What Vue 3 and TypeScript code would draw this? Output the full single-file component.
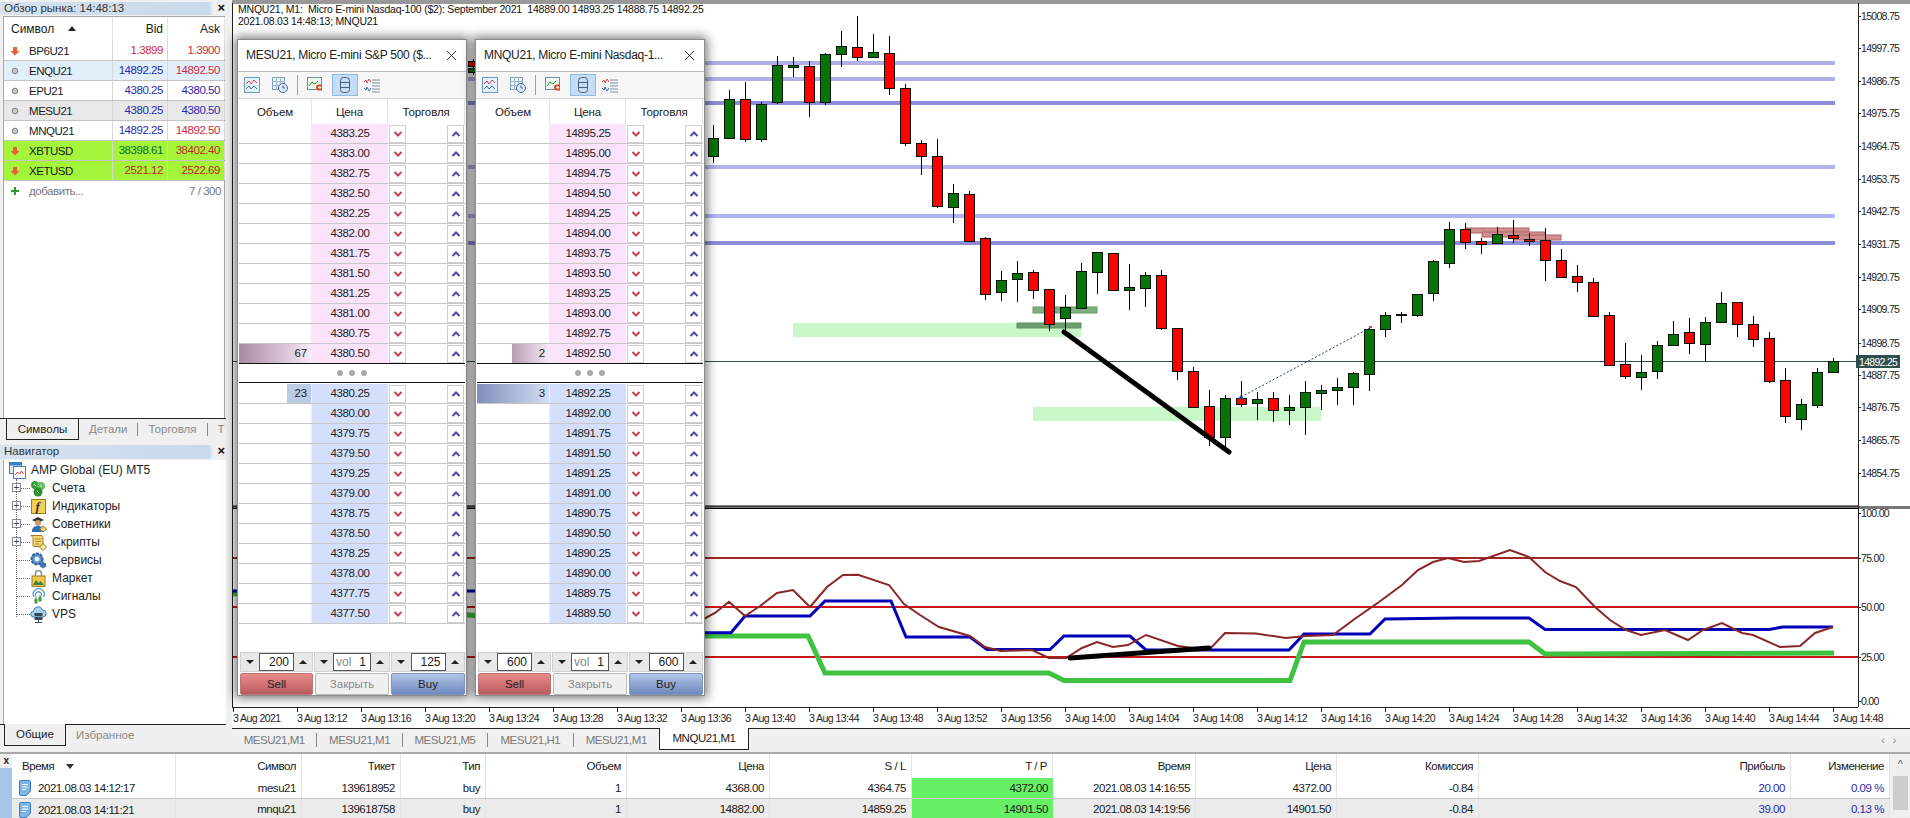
<script setup lang="ts">
type Candle = [number, 'r' | 'g', number, number, number, number]

const candles: Candle[] = [
  [15, 'r', 61, 66, 59, 67], [15, 'g', 68, 72, 66, 75],
  [30,'g',138,156,125,163],[31,'g',99,138,90,139],[32,'r',99,139,82,142],[33,'g',104,139,102,142],
  [34,'g',65,102,56,104],[35,'g',65,67,57,77],[36,'r',66,102,61,117],[37,'g',54,102,53,105],
  [38,'g',46,54,31,67],[39,'r',47,57,16,61],[40,'g',52,57,34,58],[41,'r',53,88,36,95],
  [42,'r',88,143,84,146],[43,'r',143,156,140,175],[44,'r',156,206,139,208],[45,'g',193,207,184,223],
  [46,'r',194,241,191,241],[47,'r',238,294,237,300],[48,'g',280,292,271,301],[49,'g',273,279,261,302],
  [50,'r',272,290,270,299],[51,'r',289,324,289,331],[52,'g',307,318,295,332],[53,'g',271,308,263,308],
  [54,'g',252,272,252,294],[55,'r',253,290,253,291],[56,'g',287,290,264,310],[57,'g',275,288,272,307],
  [58,'r',275,328,270,330],[59,'r',328,371,328,380],[60,'r',371,407,367,408],[61,'r',406,437,390,446],
  [62,'g',398,437,395,448],[63,'r',398,404,381,407],[64,'g',399,403,392,420],[65,'r',398,410,392,422],
  [66,'g',407,410,395,425],[67,'g',392,407,381,435],[68,'g',390,393,385,410],[69,'g',387,390,378,405],
  [70,'g',373,387,372,405],[71,'g',329,374,327,391],[72,'g',315,329,312,337],[73,'g',314,315,312,323],
  [74,'g',294,315,294,317],[75,'g',261,293,260,301],[76,'g',229,263,222,268],[77,'r',229,242,223,249],
  [78,'r',241,244,238,254],[79,'g',234,243,227,244],[80,'r',235,238,220,243],[81,'r',239,241,233,246],
  [82,'r',240,260,228,281],[83,'r',260,277,249,278],[84,'r',276,282,265,292],[85,'r',282,316,278,317],
  [86,'r',315,365,312,365],[87,'r',364,376,343,379],[88,'g',372,377,355,390],[89,'g',345,371,341,379],
  [90,'g',334,345,321,345],[91,'r',332,343,318,354],[92,'g',322,344,317,362],[93,'g',303,322,292,322],
  [94,'r',302,324,302,337],[95,'r',324,339,316,347],[96,'r',338,381,332,383],[97,'r',380,416,368,423],
  [98,'g',404,419,399,430],[99,'g',372,405,368,408],[100,'g',361,372,358,373],
]
const cx = (n: number) => 233 + 16 * n

const levels = [
  { y: 63, c: '#b0b0e6' }, { y: 79, c: '#b0b0e6' }, { y: 103, c: '#8c8cd8' },
  { y: 167, c: '#b4b4ea' }, { y: 216, c: '#b4b4f0' }, { y: 243, c: '#8c8cd8' },
]
const priceLabels: [string, number][] = [
  ['15008.75',16],['14997.75',48],['14986.75',81],['14975.75',113],['14964.75',146],['14953.75',179],
  ['14942.75',211],['14931.75',244],['14920.75',277],['14909.75',309],['14898.75',343],['14887.75',375],
  ['14876.75',407],['14865.75',440],['14854.75',473],
]
const indLabels: [string, number][] = [['100.00',513],['75.00',558],['50.00',607],['25.00',657],['0.00',701]]

const timeLabels: { x: number; t: string }[] = []
for (let i = 0; i <= 25; i++) {
  const m = 13 * 60 + 8 + i * 4
  const t = i === 0 ? '3 Aug 2021' : `3 Aug ${Math.floor(m / 60)}:${String(m % 60).padStart(2, '0')}`
  timeLabels.push({ x: 233 + 64 * i, t })
}
const headLine1 = 'MNQU21, M1:  Micro E-mini Nasdaq-100 ($2): September 2021  14889.00 14893.25 14888.75 14892.25'
const headLine2 = '2021.08.03 14:48:13; MNQU21'

const bluePts = '232,591 700,591 700,632.7 731,632.7 745,616 810,616 825,601 891,601 906,637 970,637 987,649.5 1050,649.5 1064,636 1130,636 1146,650 1289,650 1304,634 1370,634 1385,619 1458,618 1529,618 1545,629.5 1769,629.5 1783,627 1833,627'
const greenPts = '232,593.5 700,636 808,636 825,673 1049,673 1064,680.5 1290,680.5 1304,642 1529,642 1545,654 1834,653'
const brownPts = '700,621 715,613 729,601.7 745,616 760,606 777,593 793,590 810,607 827,587 843,575 858,574.7 889,585 904,604 920,615 939,627 970,636 985,647 1001,651 1032,650 1049,658 1066,658 1082,648 1097,642 1113,647 1128,645 1146,635 1178,646 1209,650 1225,633 1256,633.5 1286,638 1306,636 1333,635 1356,618 1379,602 1402,585 1418,570 1433,562 1448,558 1464,562 1479,561 1510,550 1529,557 1545,572 1560,581 1576,587 1595,607 1610,620 1626,630 1641,635 1665,630 1688,640 1703,630 1722,623 1742,633 1753,635 1780,647 1800,646 1815,633 1833,627'

const watch = [
  { s: 'BP6U21', b: '1.3899', a: '1.3900', ic: 'down', bc: 'red', ac: 'red', rc: '' },
  { s: 'ENQU21', b: '14892.25', a: '14892.50', ic: 'dot', bc: 'blue', ac: 'red', rc: 'sel' },
  { s: 'EPU21', b: '4380.25', a: '4380.50', ic: 'dot', bc: 'blue', ac: 'blue', rc: '' },
  { s: 'MESU21', b: '4380.25', a: '4380.50', ic: 'dot', bc: 'blue', ac: 'blue', rc: 'grey' },
  { s: 'MNQU21', b: '14892.25', a: '14892.50', ic: 'dot', bc: 'blue', ac: 'red', rc: '' },
  { s: 'XBTUSD', b: '38398.61', a: '38402.40', ic: 'down', bc: 'dgreen', ac: 'dred', rc: 'lime' },
  { s: 'XETUSD', b: '2521.12', a: '2522.69', ic: 'down', bc: 'dred', ac: 'dred', rc: 'lime' },
]
const treeRows = [
  { t: 'Счета', plus: true, i: 'acc' }, { t: 'Индикаторы', plus: true, i: 'ind' },
  { t: 'Советники', plus: true, i: 'exp' }, { t: 'Скрипты', plus: true, i: 'scr' },
  { t: 'Сервисы', plus: false, i: 'srv' }, { t: 'Маркет', plus: false, i: 'mkt' },
  { t: 'Сигналы', plus: false, i: 'sig' }, { t: 'VPS', plus: false, i: 'vps' },
]

function ladder(start: number, count: number) {
  return Array.from({ length: count }, (_, i) => (start - i * 0.25).toFixed(2))
}
const windows = [
  { title: 'MESU21, Micro E-mini S&P 500 ($...', left: 5, ask: ladder(4383.25, 12), bid: ladder(4380.25, 12), askVol: '67', bidVol: '23',
    askBar: { w: 100, bg: 'linear-gradient(90deg,#a78aa5,#f6e9f4)' }, bidBar: { w: 33, bg: '#bccbe6' }, v1: '200', v2: '125' },
  { title: 'MNQU21, Micro E-mini Nasdaq-1...', left: 243, ask: ladder(14895.25, 12), bid: ladder(14892.25, 12), askVol: '2', bidVol: '3',
    askBar: { w: 52, bg: 'linear-gradient(90deg,#b79db5,#f6e9f4)' }, bidBar: { w: 100, bg: 'linear-gradient(90deg,#7f8fb8,#d3def5)' }, v1: '600', v2: '600' },
]

const tabs = ['MESU21,M1', 'MESU21,M1', 'MESU21,M5', 'MESU21,H1', 'MESU21,M1']
const heads = ['Время', 'Символ', 'Тикет', 'Тип', 'Объем', 'Цена', 'S / L', 'T / P', 'Время', 'Цена', 'Комиссия', 'Прибыль', 'Изменение']
const trades = [
  ['2021.08.03 14:12:17', 'mesu21', '139618952', 'buy', '1', '4368.00', '4364.75', '4372.00', '2021.08.03 14:16:55', '4372.00', '-0.84', '20.00', '0.09 %'],
  ['2021.08.03 14:11:21', 'mnqu21', '139618758', 'buy', '1', '14882.00', '14859.25', '14901.50', '2021.08.03 14:19:56', '14901.50', '-0.84', '39.00', '0.13 %'],
]
</script>

<template>
  <div class="app">
    <div class="top">
      <aside class="left">
        <section class="market">
          <div class="band">
            <span>Обзор рынка: 14:48:13</span><b class="close">×</b>
          </div>
          <div class="mw">
            <div class="mw-row mw-head">
              <span class="c-sym">Символ <i class="tri-up"></i></span><span class="c-num">Bid</span><span class="c-num">Ask</span>
            </div>
            <div v-for="r in watch" :key="r.s" class="mw-row" :class="r.rc">
              <span class="c-sym">
                <svg v-if="r.ic === 'down'" class="mw-ic" viewBox="0 0 10 10"><path d="M3 1h4v4h2.5L5 9.5.5 5H3z" fill="#e8603a" /></svg>
                <svg v-else class="mw-ic" viewBox="0 0 10 10"><circle cx="5" cy="5" r="2.8" fill="#c8c8c8" stroke="#808080" /></svg>
                {{ r.s }}
              </span>
              <span class="c-num" :class="r.bc">{{ r.b }}</span>
              <span class="c-num" :class="r.ac">{{ r.a }}</span>
            </div>
            <div class="mw-row mw-add">
              <span class="c-sym">
                <svg class="mw-ic" viewBox="0 0 10 10"><path d="M4 1h2v3h3v2H6v3H4V6H1V4h3z" fill="#2e9a2e" /></svg>
                добавить...
              </span>
              <span class="c-count">7 / 300</span>
            </div>
          </div>
          <div class="ltabs">
            <span class="ltab on">Символы</span>
            <span class="ltab">Детали</span>
            <span class="ltab">Торговля</span>
            <span class="ltab cut">Т</span>
          </div>
        </section>

        <section class="nav">
          <div class="band nav-band"><span>Навигатор</span><b class="close">×</b></div>
          <div class="tree">
            <div class="tree-root">
              <svg class="ti" viewBox="0 0 17 17">
                <rect x="0.5" y="0.5" width="12" height="11" fill="#d8eafa" stroke="#3b7fc4" />
                <rect x="0.5" y="0.5" width="12" height="3" fill="#3b7fc4" />
                <rect x="4.5" y="4.5" width="12" height="12" fill="#fff" stroke="#4a7fb4" />
                <path d="M6 13l2.500-3 2 2 2-3 2 3" fill="none" stroke="#d04040" />
              </svg>
              <span>AMP Global (EU) MT5</span>
            </div>
            <div class="tree-kids">
              <div v-for="k in treeRows" :key="k.t" class="tree-row">
                <span class="conn"></span>
                <span v-if="k.plus" class="plus">+</span>
                <svg class="ti" viewBox="0 0 17 17">
                  <template v-if="k.i === 'acc'">
                    <circle cx="5" cy="5" r="4" fill="#3da23d" /><circle cx="11" cy="6" r="4" fill="#62c25a" /><circle cx="8" cy="12" r="4.500" fill="#2f8f32" /><path d="M4 4l2 2M10 5l2 2M7 11l2 2" stroke="#d9f5d0" />
                  </template>
                  <template v-else-if="k.i === 'ind'">
                    <rect x="1.500" y="1.500" width="14" height="14" fill="#f4cf55" stroke="#9a7b20" />
                    <text x="5.500" y="13" class="f-glyph">f</text>
                  </template>
                  <template v-else-if="k.i === 'exp'">
                    <path d="M2 4l6-3 6 3-6 3z" fill="#333" /><circle cx="8" cy="7" r="3" fill="#c89a6e" />
                    <path d="M2 16c0-5 2-6 6-6s5 2 5 6z" fill="#2f6fb8" /><path d="M13 10l3.500 3-3.500 3-3.500-3z" fill="#f4d878" stroke="#8a7020" />
                  </template>
                  <template v-else-if="k.i === 'scr'">
                    <path d="M1 1.500h10c1 0 2 1 2 2v9H4c-1 0-1-1-1-2V3.500z" fill="#f6d66e" stroke="#9a7b20" />
                    <path d="M5 5h6M5 7.500h6M5 10h4" stroke="#a88a30" /><path d="M13 9.500l3.500 3.500-3.500 3.500-3.500-3.500z" fill="#fbe9a0" stroke="#8a7020" />
                  </template>
                  <template v-else-if="k.i === 'srv'">
                    <circle cx="7" cy="7" r="5.500" fill="#5a93d0" stroke="#2f6296" stroke-dasharray="3 1" stroke-width="2" /><circle cx="7" cy="7" r="2.500" fill="#e4f0fb" />
                    <circle cx="13" cy="13" r="2.800" fill="#3c78b4" stroke="#2f6296" stroke-dasharray="2 1" />
                  </template>
                  <template v-else-if="k.i === 'mkt'">
                    <path d="M5.500 6V3.500a3 3 0 016 0V6" fill="none" stroke="#8a8a8a" stroke-width="1.500" />
                    <rect x="2" y="6" width="13" height="10.500" fill="#f0c84e" stroke="#9a7b20" />
                    <path d="M3 15l3-5 2.500 3 2-2 3.500 4z" fill="#3e7f3e" />
                  </template>
                  <template v-else-if="k.i === 'sig'">
                    <path d="M4 9a5.500 5.500 0 119.500 0M6 8.500a3 3 0 115 0" fill="none" stroke="#5f9fd0" stroke-width="1.300" />
                    <path d="M6 9v7M10 7v7" stroke="#2a7a2a" /><rect x="4.500" y="11" width="3" height="4" fill="#3aa03a" /><rect x="8.500" y="9" width="3" height="4" fill="#3aa03a" />
                  </template>
                  <template v-else>
                    <path d="M4 11a3 3 0 01-.5-6 4.500 4.500 0 018.800-1 3.500 3.500 0 01.700 7z" fill="#a9d1f0" stroke="#3f7fb8" />
                    <rect x="4.500" y="7" width="8" height="3" fill="#3a4a55" /><rect x="4.500" y="11" width="8" height="3" fill="#3a4a55" /><path d="M8.500 14v2M5 16.500h7" stroke="#3a4a55" />
                  </template>
                </svg>
                <span>{{ k.t }}</span>
              </div>
            </div>
          </div>
          <div class="ltabs bottom-tabs">
            <span class="ltab on btab">Общие</span>
            <span class="ltab plain">Избранное</span>
          </div>
        </section>
      </aside>

      <main class="main">
        <svg class="chart" viewBox="232 0 1678 728" width="1678" height="728">
          <rect x="232" y="0" width="1678" height="728" fill="#fff" />
          <path d="M232 1H1910M232 3H1910" stroke="#333" fill="none" />

          <rect x="793" y="323" width="288" height="14" fill="#c8f8c8" />
          <rect x="1033" y="407" width="288" height="14" fill="#c8f8c8" />

          <rect v-for="l in levels" :key="l.y" x="468" :y="l.y - 2" width="1367" height="4" :fill="l.c" />
          <line x1="232" y1="361.500" x2="1858" y2="361.500" stroke="#2f4f4f" />

          <rect x="1033" y="307" width="64" height="6" fill="#7fae7f" stroke="#6a9a6a" />
          <rect x="1017" y="323" width="64" height="5" fill="#6f9f6f" stroke="#5f8f5f" />
          <rect x="1466" y="228" width="63" height="5" fill="#d09090" stroke="#b06060" />
          <rect x="1482" y="232" width="63" height="5" fill="#d09090" stroke="#b06060" />
          <rect x="1514" y="235" width="47" height="5" fill="#d09090" stroke="#b06060" />

          <g v-for="(c, i) in candles" :key="i">
            <line :x1="cx(c[0]) + 0.5" :y1="c[4]" :x2="cx(c[0]) + 0.5" :y2="c[5]" stroke="#000" />
            <rect :x="cx(c[0]) - 4.5" :y="c[2] + 0.5" width="10" :height="Math.max(c[3] - c[2], 1)" :fill="c[1] === 'r' ? '#f00' : '#087408'" stroke="#0a140a" />
          </g>

          <line x1="1064" y1="332" x2="1229" y2="452" stroke="#000" stroke-width="5" stroke-linecap="round" />
          <line x1="1241" y1="397" x2="1370" y2="328" stroke="#1a3f7a" stroke-dasharray="2 2" />
          <path d="M1238 399l3-4 3 4z" fill="#1a3f9a" />
          <rect x="1369" y="326" width="3" height="2" fill="#e04040" />

          <rect x="232" y="506" width="1678" height="3" fill="#777" />
          <line x1="232" y1="506" x2="1858" y2="506" stroke="#000" />
          <line x1="232" y1="508.500" x2="1858" y2="508.500" stroke="#000" />

          <line x1="232" y1="558" x2="1858" y2="558" stroke="#a02828" stroke-width="2" />
          <line x1="232" y1="607" x2="1858" y2="607" stroke="#cc1818" stroke-width="2" />
          <line x1="232" y1="657" x2="1858" y2="657" stroke="#c81a1a" stroke-width="2" />

          <polyline :points="greenPts" fill="none" stroke="#3fc23f" stroke-width="5" />
          <polyline :points="bluePts" fill="none" stroke="#0000b8" stroke-width="3" />
          <polyline :points="brownPts" fill="none" stroke="#8b2626" stroke-width="2" />
          <line x1="1070" y1="658" x2="1209" y2="648" stroke="#000" stroke-width="5" stroke-linecap="round" />

          <line x1="1858.500" y1="3" x2="1858.500" y2="707" stroke="#222" />
          <line x1="232" y1="707.500" x2="1858" y2="707.500" stroke="#222" />
          <line x1="232.500" y1="3" x2="232.500" y2="707" stroke="#222" />

          <g v-for="p in priceLabels" :key="p[0]">
            <line x1="1858" :y1="p[1] + 0.5" x2="1861" :y2="p[1] + 0.5" stroke="#222" />
            <text x="1861" :y="p[1] + 4" class="ax price-ax">{{ p[0] }}</text>
          </g>
          <g v-for="p in indLabels" :key="p[0]">
            <line x1="1858" :y1="p[1] + 0.5" x2="1861" :y2="p[1] + 0.5" stroke="#222" />
            <text x="1861" :y="p[1] + 4" class="ax price-ax">{{ p[0] }}</text>
          </g>
          <rect x="1856" y="355" width="44" height="13" fill="#2f4f4f" />
          <text x="1859" y="365.500" class="ax price-ax lite">14892.25</text>

          <g v-for="t in timeLabels" :key="t.x">
            <line :x1="t.x + 0.5" y1="707" :x2="t.x + 0.5" y2="712" stroke="#222" />
            <text :x="t.x" y="722" class="ax">{{ t.t }}</text>
          </g>

          <text x="238" y="13" class="ax head">{{ headLine1 }}</text>
          <text x="238" y="25" class="ax head">{{ headLine2 }}</text>
        </svg>

        <div class="ctabs">
          <span v-for="(t, i) in tabs" :key="i" class="ctab">{{ t }}</span>
          <span class="ctab active">MNQU21,M1</span>
          <span class="arrows">‹&nbsp;&nbsp;&nbsp;›</span>
        </div>

        <div v-for="w in windows" :key="w.left" class="dom" :style="{ left: w.left + 'px' }">
          <div class="dom-title"><span>{{ w.title }}</span>
            <svg class="dom-x" viewBox="0 0 12 12"><path d="M1 1l10 10M11 1L1 11" stroke="#222" fill="none" /></svg>
          </div>
          <div class="dom-tools">
            <svg class="tool" viewBox="0 0 16 16"><rect x="0.500" y="0.500" width="15" height="15" fill="#e6f2fb" stroke="#6f9fc0" /><path d="M2 7l3-3 2 3 3-4 3 3" fill="none" stroke="#d04848" /><path d="M2 12l3-3 2 3 3-3 3 3" fill="none" stroke="#3f6fb0" /></svg>
            <svg class="tool t2" viewBox="0 0 16 16"><rect x="0.500" y="0.500" width="12" height="12" fill="#eef4fa" stroke="#7f9fbf" /><path d="M0 4.500h13M0 8.500h13M4.500 0v13M8.500 0v13" stroke="#9fb7cf" /><circle cx="11" cy="11" r="4.500" fill="#dfeaf5" stroke="#4a6f9a" /><path d="M11 8.500V11h2" fill="none" stroke="#4a6f9a" /></svg>
            <i class="tool-sep"></i>
            <svg class="tool" viewBox="0 0 16 16"><rect x="0.500" y="0.500" width="14" height="12" fill="#eef7ee" stroke="#6f8f9f" /><path d="M2 9l3-4 3 2 3-3" fill="none" stroke="#3a9a3a" /><path d="M9 10.500a3 3 0 013-3h3v2h-3a1 1 0 000 2h3v2h-3a3 3 0 01-3-3z" fill="#d84a2a" /></svg>
            <span class="tool-on"><svg class="tool" viewBox="0 0 16 16"><rect x="3.500" y="0.500" width="9" height="15" rx="3" fill="none" stroke="#45617f" /><path d="M3.500 5.500h9M3.500 10.500h9" stroke="#45617f" /></svg></span>
            <svg class="tool" viewBox="0 0 16 16"><path d="M0 5l2-2 1 3 2-4 2 3" fill="none" stroke="#d04848" /><path d="M0 11l2 2 1-3 2 4 2-3" fill="none" stroke="#3f6fb0" /><path d="M8 3h8M8 6h8M8 9h8M8 12h8M8 15h8" stroke="#7f8f9f" /></svg>
          </div>
          <div class="dom-row dom-head"><span>Объем</span><span>Цена</span><span>Торговля</span></div>
          <div v-for="(p, i) in w.ask" :key="'a' + p" class="dom-row">
            <span class="vol">
              <i v-if="i === 11" class="bar" :style="{ width: w.askBar.w + '%', background: w.askBar.bg }"></i>
              <em v-if="i === 11">{{ w.askVol }}</em>
            </span>
            <span class="price ask">{{ p }}</span>
            <span class="trade">
              <i class="tb"><svg viewBox="0 0 10 10"><path d="M1.500 3L5 6.500 8.500 3" fill="none" stroke="#c2405a" stroke-width="2" /></svg></i>
              <i class="tb"><svg viewBox="0 0 10 10"><path d="M1.500 7L5 3.500 8.500 7" fill="none" stroke="#4a4aa8" stroke-width="2" /></svg></i>
            </span>
          </div>
          <div class="dom-dots"><i></i><i></i><i></i></div>
          <div v-for="(p, i) in w.bid" :key="'b' + p" class="dom-row">
            <span class="vol">
              <i v-if="i === 0" class="bar" :style="{ width: w.bidBar.w + '%', background: w.bidBar.bg }"></i>
              <em v-if="i === 0">{{ w.bidVol }}</em>
            </span>
            <span class="price bid">{{ p }}</span>
            <span class="trade">
              <i class="tb"><svg viewBox="0 0 10 10"><path d="M1.500 3L5 6.500 8.500 3" fill="none" stroke="#c2405a" stroke-width="2" /></svg></i>
              <i class="tb"><svg viewBox="0 0 10 10"><path d="M1.500 7L5 3.500 8.500 7" fill="none" stroke="#4a4aa8" stroke-width="2" /></svg></i>
            </span>
          </div>
          <div class="dom-fill"></div>
          <div class="dom-ctrl">
            <div class="spin"><i class="sb dn"></i><span class="inp">{{ w.v1 }}</span><i class="sb up"></i></div>
            <div class="spin mid"><i class="sb dn"></i><span class="inp vol-inp"><small>vol</small>1</span><i class="sb up"></i></div>
            <div class="spin"><i class="sb dn"></i><span class="inp">{{ w.v2 }}</span><i class="sb up"></i></div>
          </div>
          <div class="dom-btns">
            <span class="btn sell">Sell</span><span class="btn closeb">Закрыть</span><span class="btn buy">Buy</span>
          </div>
        </div>
      </main>
    </div>

    <section class="bottom">
      <div class="strip"><b>x</b><i></i></div>
      <div class="tbl">
        <div class="tr th">
          <span v-for="(h, i) in heads" :key="i" class="td" :class="{ first: i === 0 }">{{ h }}<i v-if="i === 0" class="tri-down"></i></span>
        </div>
        <div v-for="(r, ri) in trades" :key="ri" class="tr" :class="{ alt: ri === 1 }">
          <span v-for="(v, i) in r" :key="i" class="td" :class="{ first: i === 0, tp: i === 7, pos: i >= 11 }">
            <svg v-if="i === 0" class="doc" viewBox="0 0 12 16"><path d="M.5 1.500a1 1 0 011-1h9a1 1 0 011 1V11l-4 4.500h-6a1 1 0 01-1-1z" fill="#7fb4e6" stroke="#3d7fbe" /><path d="M3 4.500h6M3 7h6M3 9.500h4" stroke="#fff" /></svg>{{ v }}
          </span>
        </div>
      </div>
      <div class="scroll"><b>^</b><i></i></div>
    </section>
  </div>
</template>

<style>
html, body { margin: 0; padding: 0; background: #f0f0f0; overflow: hidden; }
</style>

<style scoped>
.app { width: 1910px; height: 818px; display: flex; flex-direction: column; background: #f0f0f0; overflow: hidden;
  font-family: "Liberation Sans", Arial, sans-serif; font-size: 11.5px; letter-spacing: -0.45px; color: #1a1a1a; }
.top { display: flex; height: 752px; }
.left { width: 232px; flex: none; display: flex; flex-direction: column; border-right: 0; }
.market { height: 440px; display: flex; flex-direction: column; padding-top: 2px; box-sizing: border-box; }
.band { height: 13px; line-height: 12px; margin-right: 5px; padding-left: 4px; display: flex; justify-content: space-between; background: linear-gradient(90deg, #d6e2ee, #c8d9ea 92%, #f0f0f0 94%); color: #333; letter-spacing: 0; }
.close { font-weight: 700; font-size: 13px; line-height: 11px; padding-right: 2px; color: #111; }
.mw { height: 402px; margin: 1px 7px 0 3px; background: #fff; border: 1px solid #a8a8a8; border-bottom: 0; box-sizing: border-box; }
.mw-row { height: 20px; display: grid; grid-template-columns: 109px 55px 57px; align-items: center; border-bottom: 1px solid #c4c4c4; box-sizing: border-box; }
.mw-head { height: 24px; border-bottom: 0; }
.mw-head span { height: 24px; line-height: 24px; border-right: 1px solid #e4e4e4; box-sizing: border-box; }
.mw-head .c-sym { padding-left: 7px; letter-spacing: 0; font-size: 12px; }
.mw-row:not(.mw-head) .c-sym { height: 100%; display: flex; align-items: center; gap: 9px; padding-left: 6px; border-right: 1px solid #d8d8d8; box-sizing: border-box; }
.c-num { text-align: right; padding-right: 4px; height: 100%; line-height: 19px; border-right: 1px solid #d8d8d8; box-sizing: border-box; }
.mw-head .c-num { line-height: 24px; font-size: 12px; letter-spacing: 0; }
.mw-ic { width: 10px; height: 10px; flex: none; }
.tri-up { display: inline-block; width: 0; height: 0; border: 4px solid transparent; border-top: 0; border-bottom: 5px solid #222; margin: 0 0 2px 10px; }
.sel { background: #e2eefa; }
.grey { background: #e8e8e8; }
.lime { background: #a4f53a; }
.red { color: #d02a3e; }
.blue { color: #2a2ab0; }
.dgreen { color: #0a6a30; }
.dred { color: #c02828; }
.mw-add { border-bottom: 0; grid-template-columns: 109px 112px; color: #777; }
.mw-add .c-sym { border-right: 0 !important; }
.c-count { text-align: right; padding-right: 4px; line-height: 19px; }
.ltabs { height: 22px; display: flex; align-items: center; position: relative; border-top: 1px solid #222; margin-right: 6px; box-sizing: border-box; }
.ltab { padding: 0 10px; height: 13px; line-height: 13px; color: #888; border-right: 1px solid #888; letter-spacing: 0; }
.ltab.on { margin: -1px 0 0 6px; width: 73px; height: 21px; line-height: 21px; padding: 0; text-align: center; color: #222; background: #f0f0f0; border: 1px solid #222; border-top: 0; box-sizing: border-box; }
.ltab.cut { border: 0; padding-right: 0; }
.nav { flex: 1; display: flex; flex-direction: column; padding-top: 5px; box-sizing: border-box; min-height: 0; }
.nav-band { flex: none; height: 14px; line-height: 13px; }
.tree { flex: 1; margin: 1px 6px 0 3px; background: #fff; border-left: 1px solid #a8a8a8; padding-top: 1px; font-size: 12px; letter-spacing: 0; color: #222; }
.tree-root { height: 18px; display: flex; align-items: center; gap: 5px; padding-left: 5px; }
.tree-kids { margin-left: 12px; border-left: 1px dotted #666; height: 138px; padding-top: 0; }
.tree-row { height: 18px; display: flex; align-items: center; position: relative; }
.conn { width: 13px; border-top: 1px dotted #666; flex: none; }
.plus { position: absolute; left: -5px; top: 4px; width: 9px; height: 9px; line-height: 8px; text-align: center; font-size: 10px; background: #fff; border: 1px solid #888; color: #345; box-sizing: border-box; }
.ti { width: 17px; height: 17px; flex: none; margin-right: 5px; }
.tree-root .ti { margin-right: 0; }
.f-glyph { font-family: "Liberation Serif", serif; font-style: italic; font-weight: 700; font-size: 13px; fill: #333; }
.bottom-tabs { flex: none; height: 22px; margin: 0 6px 6px 0; }
.ltab.btab { width: 62px; height: 22px; margin-left: 4px; line-height: 21px; }
.ltab.plain { border: 0; margin-left: 0; }
.main { flex: 1; position: relative; display: flex; flex-direction: column; min-width: 0; }
.chart { display: block; flex: none; }
.ax { font-family: "Liberation Sans", Arial, sans-serif; font-size: 10.5px; letter-spacing: -0.55px; fill: #222; }
.ax.price-ax { letter-spacing: -0.7px; }
.ax.lite { fill: #fff; }
.ax.head { font-size: 10.5px; letter-spacing: -0.22px; white-space: pre; fill: #111; }
.ctabs { height: 22px; display: flex; align-items: center; background: #f0f0f0; border-top: 1px solid #222; box-sizing: border-box; position: relative; color: #777; }
.ctab { width: 85.4px; height: 14px; line-height: 14px; text-align: center; border-right: 1px solid #888; box-sizing: border-box; flex: none; }
.ctab:nth-child(5) { border-right: 0; }
.ctab.active { width: 90px; height: 22px; line-height: 20px; margin-top: -2px; background: #fff; color: #222; border: 1px solid #222; border-top: 0; box-sizing: border-box; }
.arrows { margin-left: auto; padding-right: 14px; color: #888; }
.dom { position: absolute; top: 39px; width: 230px; height: 657px; background: #fff; border: 1px solid #8c8c8c; box-sizing: border-box; box-shadow: 0 0 10px 2px rgba(0, 0, 0, 0.55); display: flex; flex-direction: column; padding: 0 1px; letter-spacing: -0.1px; }
.dom-title { height: 30px; flex: none; display: flex; align-items: center; justify-content: space-between; padding: 0 8px 1px 7px; font-size: 12px; letter-spacing: -0.3px; color: #222; }
.dom-x { width: 11px; height: 11px; }
.dom-tools { height: 28px; flex: none; display: flex; align-items: center; gap: 12px; padding-left: 6px; border-top: 1px solid #bcbcbc; border-bottom: 1px solid #d4d4d4; box-sizing: border-box; margin: 0 -1px; background: #f6f6f6; }
.tool { width: 16px; height: 16px; flex: none; display: block; }
.tool-sep { width: 1px; height: 20px; background: #a0a0a0; margin: 0 -3px; }
.tool-on { width: 26px; height: 22px; background: #c4dcf4; border: 1px solid #8ebce6; box-sizing: border-box; display: flex; align-items: center; justify-content: center; margin: 0 -6px 0 -3px; }
.dom-row { flex: none; height: 20px; display: grid; grid-template-columns: 73px 76px 77px; border-bottom: 1px solid #c8c8c8; box-sizing: border-box; }
.dom-head { height: 25px; border-bottom: 0; text-align: center; line-height: 26px; }
.dom-head span { border-right: 1px solid #e6e6e6; }
.vol { position: relative; display: block; border-right: 1px solid #eee; }
.bar { position: absolute; right: 0; top: 0; bottom: 0; }
.vol em { position: absolute; right: 4px; top: 0; line-height: 19px; font-style: normal; color: #222; }
.price { text-align: center; line-height: 19px; letter-spacing: -0.35px; color: #222; }
.ask { background: #fbe3fb; }
.bid { background: #d4e0fb; }
.trade { display: flex; justify-content: space-between; align-items: center; padding: 0 1px; }
.tb { width: 17px; height: 18px; background: #fff; border: 1px solid #cfcfcf; box-sizing: border-box; display: flex; align-items: center; justify-content: center; }
.tb svg { width: 10px; height: 10px; }
.dom-dots { flex: none; height: 20px; display: flex; align-items: center; justify-content: center; gap: 6px; border-top: 1px solid #111; border-bottom: 1px solid #111; box-sizing: border-box; margin-top: -1px; margin-bottom: 1px; }
.dom-dots i { width: 6px; height: 6px; border-radius: 50%; background: #a8a8a8; }
.dom-fill { flex: 1; }
.dom-ctrl { flex: none; height: 20px; display: grid; grid-template-columns: 73px 76px 74px; gap: 1px; padding: 0 1px; }
.spin { display: flex; background: #e8e8e8; border: 1px solid #d0d0d0; box-sizing: border-box; align-items: stretch; }
.sb { flex: 1; position: relative; }
.sb::after { content: ""; position: absolute; left: 50%; top: 50%; margin: -2px 0 0 -4px; border: 4px solid transparent; }
.sb.dn::after { border-bottom: 0; border-top: 4px solid #222; }
.sb.up::after { border-top: 0; border-bottom: 4px solid #222; }
.inp { width: 35px; background: #fff; border: 1px solid #555; box-sizing: border-box; text-align: right; padding-right: 4px; line-height: 16px; margin: 0; font-size: 12px; letter-spacing: 0; }
.vol-inp { width: 38px; display: flex; justify-content: space-between; padding-left: 2px; }
.vol-inp small { font-size: 12px; color: #888; }
.dom-btns { flex: none; height: 21px; margin: 1px 0 1px; display: grid; grid-template-columns: 73px 74px 74px; gap: 2px; padding: 0 1px; }
.btn { text-align: center; line-height: 20px; border: 1px solid #bbb; border-radius: 2px; box-sizing: border-box; font-size: 11.5px; letter-spacing: 0; }
.sell { background: linear-gradient(#e98a8a, #b95a5e); border-color: #b77; color: #222; }
.closeb { background: #f0f0f0; color: #888; }
.buy { background: linear-gradient(#b2c6ea, #6f88bc); border-color: #7f93bf; color: #222; }
.bottom { flex: none; height: 66px; display: flex; background: #fff; border-top: 2px solid #a8a8a8; box-sizing: border-box; }
.strip { width: 12px; flex: none; background: #f0f0f0; display: flex; flex-direction: column; align-items: center; }
.strip b { font-size: 10px; line-height: 13px; color: #222; }
.strip i { flex: 1; width: 100%; background: #a8c4e8; margin-top: 1px; }
.tbl { flex: 1; min-width: 0; }
.tr { display: grid; grid-template-columns: 164px 126px 99px 85px 141px 143px 142px 141px 143px 141px 142px 312px 99px; height: 21px; line-height: 20px; border-bottom: 1px solid #c8c8c8; box-sizing: border-box; }
.th { height: 24px; line-height: 25px; border-bottom: 0; }
.td { text-align: right; padding-right: 5px; border-right: 1px solid #e4e4e4; white-space: nowrap; box-sizing: border-box; }
.td.first { text-align: left; padding-left: 10px; display: flex; align-items: center; }
.tri-down { width: 0; height: 0; border: 4px solid transparent; border-bottom: 0; border-top: 5px solid #333; margin-left: 12px; }
.alt { background: #ebebeb; border-bottom: 0; }
.tp { background: #66f066; border-right: 0; }
.pos { color: #2a2aa8; }
.doc { width: 12px; height: 16px; margin: 0 7px 0 -3px; flex: none; }
.scroll { width: 20px; flex: none; background: #f0f0f0; display: flex; flex-direction: column; align-items: center; }
.scroll b { font-size: 11px; line-height: 20px; font-weight: 400; color: #555; }
.scroll i { width: 15px; height: 34px; background: #cdcdcd; margin-top: 2px; }
</style>
